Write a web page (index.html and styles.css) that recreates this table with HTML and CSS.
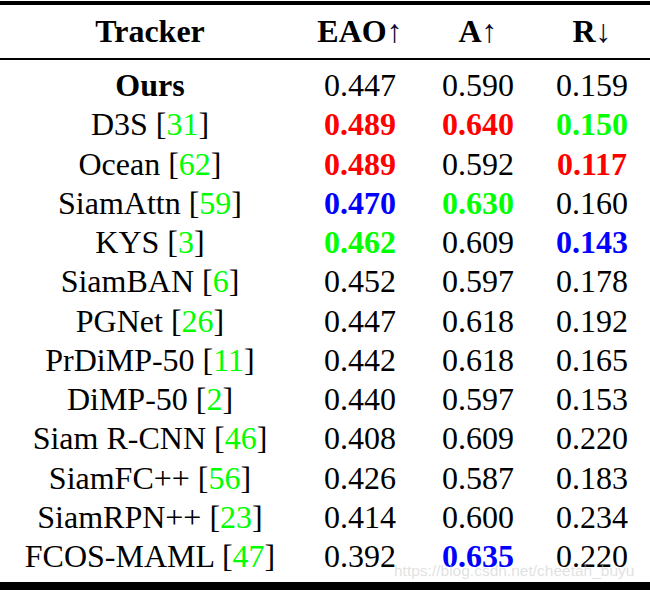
FILE: index.html
```html
<!DOCTYPE html>
<html>
<head>
<meta charset="utf-8">
<link rel="stylesheet" href="styles.css">
</head>
<body>
<div class="tbl">
  <div class="head">
    <div class="c1">Tracker</div>
    <div class="c2">EAO<span class="arr">↑</span></div>
    <div class="c3">A<span class="arr">↑</span></div>
    <div class="c4">R<span class="arr">↓</span></div>
  </div>
  <div class="body">
    <div class="c1"><b>Ours</b></div><div class="c2">0.447</div><div class="c3">0.590</div><div class="c4">0.159</div>
    <div class="c1">D3S [<span class="ref">31</span>]</div><div class="c2 red">0.489</div><div class="c3 red">0.640</div><div class="c4 grn">0.150</div>
    <div class="c1">Ocean [<span class="ref">62</span>]</div><div class="c2 red">0.489</div><div class="c3">0.592</div><div class="c4 red">0.117</div>
    <div class="c1">SiamAttn [<span class="ref">59</span>]</div><div class="c2 blu">0.470</div><div class="c3 grn">0.630</div><div class="c4">0.160</div>
    <div class="c1">KYS [<span class="ref">3</span>]</div><div class="c2 grn">0.462</div><div class="c3">0.609</div><div class="c4 blu">0.143</div>
    <div class="c1">SiamBAN [<span class="ref">6</span>]</div><div class="c2">0.452</div><div class="c3">0.597</div><div class="c4">0.178</div>
    <div class="c1">PGNet [<span class="ref">26</span>]</div><div class="c2">0.447</div><div class="c3">0.618</div><div class="c4">0.192</div>
    <div class="c1">PrDiMP-50 [<span class="ref">11</span>]</div><div class="c2">0.442</div><div class="c3">0.618</div><div class="c4">0.165</div>
    <div class="c1">DiMP-50 [<span class="ref">2</span>]</div><div class="c2">0.440</div><div class="c3">0.597</div><div class="c4">0.153</div>
    <div class="c1">Siam R-CNN [<span class="ref">46</span>]</div><div class="c2">0.408</div><div class="c3">0.609</div><div class="c4">0.220</div>
    <div class="c1">SiamFC++ [<span class="ref">56</span>]</div><div class="c2">0.426</div><div class="c3">0.587</div><div class="c4">0.183</div>
    <div class="c1">SiamRPN++ [<span class="ref">23</span>]</div><div class="c2">0.414</div><div class="c3">0.600</div><div class="c4">0.234</div>
    <div class="c1">FCOS-MAML [<span class="ref">47</span>]</div><div class="c2">0.392</div><div class="c3 blu">0.635</div><div class="c4">0.220</div>
  </div>
</div>
<div class="wm">https://blog.csdn.net/cheetah_buyu</div>
</body>
</html>
```
FILE: styles.css
```css
html, body {
  margin: 0;
  padding: 0;
  background: #fff;
}
body {
  font-family: "Liberation Serif", "Times New Roman", serif;
  font-size: 32px;
  color: #000;
  position: relative;
  width: 650px;
  height: 590px;
  overflow: hidden;
}
.tbl {
  margin-top: 1px;
  border-top: 4px solid #000;
  border-bottom: 8px solid #000;
}
.head, .body {
  display: grid;
  grid-template-columns: 300px 120px 116px 114px;
  text-align: center;
}
.head {
  height: 53px;
  align-items: center;
  font-weight: bold;
  border-bottom: 2px solid #000;
  line-height: 53px;
}
.body {
  padding: 6px 0 5.75px;
  grid-auto-rows: 39.25px;
  line-height: 39.25px;
}
.c4 { padding-right: 2px; }
.arr {
  font-weight: normal;
  color: #0a0a30;
}
.ref { color: #00ff00; }
.red { color: #ff0000; font-weight: bold; }
.grn { color: #00ff00; font-weight: bold; }
.blu { color: #0000ff; font-weight: bold; }
.wm {
  position: absolute;
  left: 394px;
  top: 562px;
  font-family: "Liberation Sans", Arial, sans-serif;
  font-size: 15.5px;
  line-height: 18px;
  color: rgba(200, 200, 200, 0.55);
  white-space: nowrap;
}
```
